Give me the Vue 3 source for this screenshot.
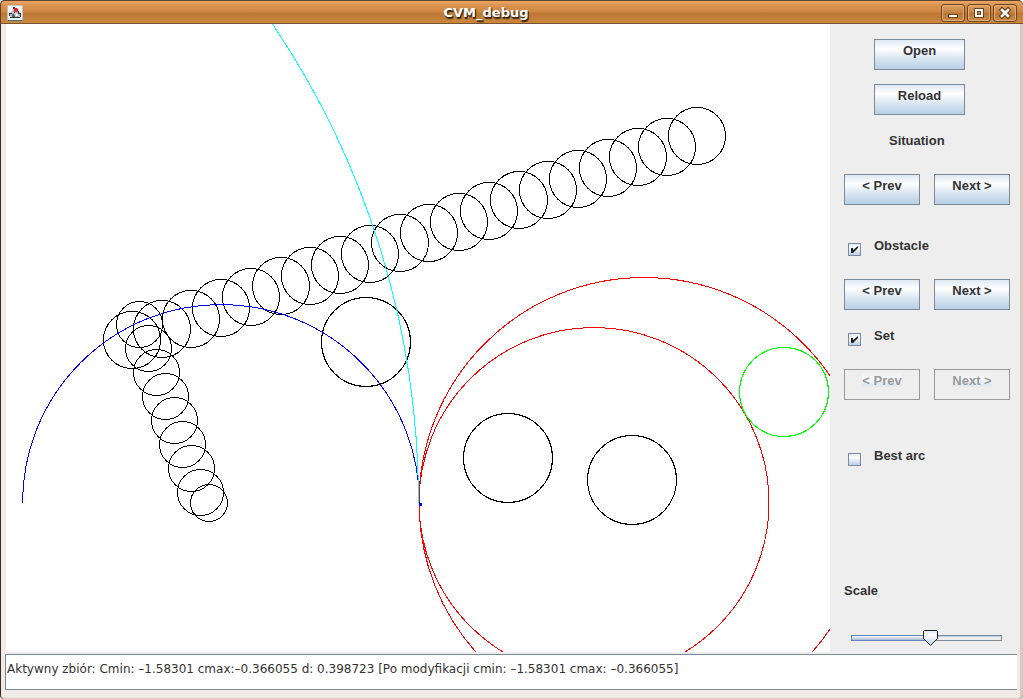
<script setup>
import { ref } from 'vue'

const obstacle = ref(true)
const set = ref(true)
const bestArc = ref(false)
const scale = ref(53)
const status = ref('Aktywny zbiór: Cmin: –1.58301 cmax:–0.366055 d: 0.398723 [Po modyfikacji cmin: –1.58301 cmax: –0.366055]')

// Evenly spaced circles between two centres
const chain = (from, to, count, r) =>
  Array.from({ length: count }, (_, i) => ({
    x: Math.round(from[0] + ((to[0] - from[0]) * i) / (count - 1)),
    y: Math.round(from[1] + ((to[1] - from[1]) * i) / (count - 1)),
    r,
  }))

const obstacles = [
  ...chain([126, 316], [691, 112], 20, 28.5),
  ...chain([133, 300], [193.6, 468], 8, 23).map((c) => ({ ...c, x: c.x + 0.5, y: c.y + 0.5 })),
  { x: 203, y: 479, r: 18.5 },
  { x: 360, y: 318, r: 44.5 },
  { x: 502, y: 434, r: 44.5 },
  { x: 626, y: 456, r: 44.5 },
]
</script>

<template>
  <div class="window">
    <header class="titlebar">
      <svg class="app-icon" width="16" height="16" viewBox="0 0 16 16" aria-hidden="true">
        <rect x="0.5" y="0.5" width="15" height="15" rx="1" fill="#f4f6f6" stroke="#b9c3c8" />
        <path d="M1 15.5h14" stroke="#3c6c8c" />
        <path d="M5 6l2-3 3 1 1 3 3 1v3l-3 2H5L3 11V8z" fill="#b4bcc0" />
        <path d="M2 8h3v1H3v2H2zM6 2h2v2H6zM11 6h1v2h2v4h-1V9h-2zM3 12h10v1H3zM7 7h1v1H7z" fill="#303638" />
        <path d="M5 9h2l1 3H5z" fill="#555d60" />
        <path d="M8 8l3 1v2H9z" fill="#f4f6f6" />
        <path d="M7 4l1-1h2l1 1v2l-1 1H8L7 6z" fill="#e81828" />
      </svg>
      <h1 class="title">CVM_debug</h1>
      <div class="controls">
        <button class="control" aria-label="Minimize">
          <svg width="22" height="16" viewBox="0 0 22 16" shape-rendering="crispEdges">
            <rect x="6" y="9" width="10" height="4" fill="#70441c" /><rect x="7" y="10" width="8" height="2" fill="#fff" />
          </svg>
        </button>
        <button class="control" aria-label="Maximize">
          <svg width="22" height="16" viewBox="0 0 22 16" shape-rendering="crispEdges">
            <rect x="6" y="3" width="10" height="10" fill="#70441c" /><rect x="7" y="4" width="8" height="8" fill="#fff" />
            <rect x="9" y="6" width="4" height="4" fill="#70441c" /><rect x="10" y="7" width="2" height="2" fill="#c98643" />
          </svg>
        </button>
        <button class="control" aria-label="Close">
          <svg width="22" height="16" viewBox="0 0 22 16">
            <path d="M8 5l6 6M14 5l-6 6" stroke="#70441c" stroke-width="5" stroke-linecap="square" />
            <path d="M8 5l6 6M14 5l-6 6" stroke="#fff" stroke-width="2.6" stroke-linecap="square" />
          </svg>
        </button>
      </div>
    </header>

    <div class="frame">
      <main class="workspace">
        <svg class="canvas" shape-rendering="crispEdges" fill="none" role="img" aria-label="Arcs and obstacles">
          <g stroke="#000">
            <circle v-for="(c, i) in obstacles" :key="i" :cx="c.x" :cy="c.y" :r="c.r" />
          </g>
          <path d="M16.5 479A198.500 198.500 0 0 1 413.500 479" stroke="#00f" />
          <circle cx="588" cy="478.500" r="175" stroke="#f00" />
          <circle cx="638" cy="478.500" r="225" stroke="#f00" />
          <path d="M266.5 0A854 854 0 0 1 412.500 479" stroke="#0ff" />
          <circle cx="778" cy="368" r="44.5" stroke="#0f0" />
          <rect x="413" y="479" width="3" height="3" fill="#00f" />
        </svg>

        <aside class="panel">
          <button class="btn wide">Open</button>
          <button class="btn wide">Reload</button>
          <div class="caption indent">Situation</div>
          <div class="pair">
            <button class="btn">&lt; Prev</button>
            <button class="btn">Next &gt;</button>
          </div>
          <div class="check spaced">
            <input id="obstacle" v-model="obstacle" type="checkbox" />
            <label for="obstacle">Obstacle</label>
          </div>
          <div class="pair">
            <button class="btn">&lt; Prev</button>
            <button class="btn">Next &gt;</button>
          </div>
          <div class="check">
            <input id="set" v-model="set" type="checkbox" />
            <label for="set">Set</label>
          </div>
          <div class="pair">
            <button class="btn" disabled><span>&lt; Prev</span></button>
            <button class="btn" disabled><span>Next &gt;</span></button>
          </div>
          <div class="check best">
            <input id="best" v-model="bestArc" type="checkbox" />
            <label for="best">Best arc</label>
          </div>
          <label class="caption scale" for="scale">Scale</label>
          <input id="scale" v-model="scale" class="slider" type="range" min="0" max="100" :style="{ '--fill': scale + '%' }" />
        </aside>
      </main>
      <input v-model="status" class="status" type="text" readonly aria-label="Status" />
    </div>
  </div>
</template>

<style>
body {
  margin: 0;
}
</style>

<style scoped>
.window {
  display: flex;
  flex-direction: column;
  box-sizing: border-box;
  height: 100vh;
  overflow: hidden;
  background: #3a2a1e;
  border-radius: 5px 5px 4px 4px;
  font-family: "Liberation Sans", Arial, sans-serif;
  color: #333;
}
.titlebar {
  display: flex;
  align-items: center;
  box-sizing: border-box;
  height: 24px;
  flex: none;
  padding: 1px 6px 0 6px;
  border-top: 1px solid #5e412c;
  border-bottom: 1px solid #7a5230;
  border-left: 1px solid #5e412c;
  border-radius: 5px 5px 0 0;
  background: linear-gradient(#eaa868 0, #dc9450 4px, #cd8740 11px, #bd7834 12px, #c98840 100%);
}
.app-icon {
  flex: none;
}
.title {
  flex: 1;
  margin: 0 0 0 8px;
  text-align: center;
  font: bold 13px/20px "DejaVu Sans", sans-serif;
  color: #fff;
  text-shadow: 1px 1px 1px #3a2410, 1px 2px 1px #3a2410;
}
.controls {
  display: flex;
  gap: 2px;
}
.control {
  box-sizing: border-box;
  width: 24px;
  height: 18px;
  padding: 0;
  border: 1px solid #70441c;
  border-radius: 3px;
  background: linear-gradient(#dfa164, #c4813f 50%, #b97532 51%, #cb8b49);
  box-shadow: inset 0 0 0 1px #e0ac78;
}
.control svg {
  display: block;
}
.frame {
  display: flex;
  flex-direction: column;
  flex: 1;
  min-height: 0;
  margin-left: 1px;
  padding: 0 3px 8px 4px;
  border-right: 3px solid #d6cbc0;
  border-bottom: 1px solid #d6cbc0;
  border-radius: 0 0 4px 4px;
  background: #f0ebe6;
}
.workspace {
  display: flex;
  flex: 1;
  min-height: 0;
  padding-bottom: 2px;
  background: #eee;
}
.canvas {
  flex: 1;
  min-width: 0;
  height: 100%;
  margin-left: 1px;
  background: #fff;
}
.panel {
  display: flex;
  flex-direction: column;
  gap: 14px;
  box-sizing: border-box;
  width: 187px;
  flex: none;
  padding: 15px 7px 0 14px;
  background: #eee;
  font-weight: bold;
  font-size: 13px;
  line-height: 15px;
}
.btn {
  box-sizing: border-box;
  flex: none;
  height: 31px;
  width: 76px;
  padding: 0 0 8px;
  border: 1px solid #7a8a99;
  background: linear-gradient(#dde8f3, #fff 30%, #dde8f3 60%, #b8cfe5);
  font: inherit;
  color: #333;
}
.btn:disabled {
  border-color: #999;
  background: #eee;
  color: #999;
}
.btn:disabled span {
  background: linear-gradient(#eee, #f8fafc 40%, #dde8f3 80%, #eee);
}
.wide {
  width: 91px;
  margin-left: 30px;
}
.pair {
  display: flex;
  gap: 14px;
}
.caption,
.check {
  box-sizing: border-box;
  flex: none;
  height: 31px;
  padding-top: 4px;
}
.indent {
  margin-left: 45px;
}
.check {
  display: flex;
  align-items: flex-start;
  gap: 13px;
  padding-left: 4px;
}
.check input {
  appearance: none;
  box-sizing: border-box;
  width: 13px;
  height: 13px;
  margin: 5px 0 0;
  border: 1px solid #7a8a99;
  background: linear-gradient(#dde8f3, #fff 30%, #b8cfe5);
}
.check input:checked {
  background:
    url("data:image/svg+xml,%3Csvg xmlns='http://www.w3.org/2000/svg' width='11' height='11'%3E%3Cpath d='M2 4h2v2l5-4v2L4 9H2z' fill='%23222'/%3E%3C/svg%3E"),
    linear-gradient(#dde8f3, #fff 30%, #b8cfe5);
}
.spaced {
  margin-top: 15px;
}
.best {
  margin-top: 30px;
}
.scale {
  margin-top: 90px;
}
.slider {
  appearance: none;
  flex: none;
  width: 151px;
  height: 16px;
  margin: 6px 0 0 7px;
  background: none;
}
.slider::-webkit-slider-runnable-track {
  box-sizing: border-box;
  height: 6px;
  border: 1px solid;
  border-image: linear-gradient(90deg, #6382bf var(--fill), #7a8a99 var(--fill)) 1;
  background:
    linear-gradient(#fff, #a3b8cc) 0 0 / var(--fill) 100% no-repeat,
    linear-gradient(#b8cfe5 1px, #eee 1px);
}
.slider::-webkit-slider-thumb {
  appearance: none;
  width: 15px;
  height: 16px;
  margin-top: -6px;
  background: url("data:image/svg+xml,%3Csvg xmlns='http://www.w3.org/2000/svg' width='15' height='16'%3E%3Cdefs%3E%3ClinearGradient id='g' x2='0' y2='1'%3E%3Cstop stop-color='%23dde8f3'/%3E%3Cstop offset='.3' stop-color='%23fff'/%3E%3Cstop offset='1' stop-color='%23b8cfe5'/%3E%3C/linearGradient%3E%3C/defs%3E%3Cpath d='M1.500.5h12l1 1v7l-7 7-7-7v-7z' fill='url(%23g)' stroke='%23222'/%3E%3C/svg%3E");
}
.status {
  box-sizing: border-box;
  flex: none;
  width: 100%;
  height: 36px;
  margin: 0;
  padding: 0 0 7px 1px;
  border: 1px solid #7a8a99;
  border-right: 0;
  border-radius: 0;
  outline: none;
  background: #fff;
  font: 12px "DejaVu Sans", sans-serif;
  color: #333;
}
</style>
